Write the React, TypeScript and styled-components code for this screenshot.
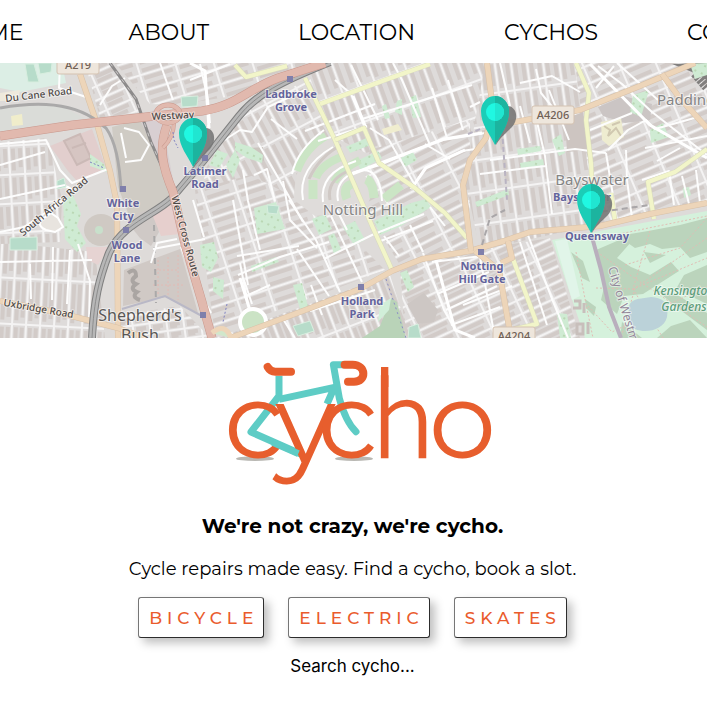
import React from "react";
import styled, { createGlobalStyle } from "styled-components";

const GlobalStyle = createGlobalStyle`
  *, *::before, *::after { box-sizing: border-box; }
  body {
    margin: 0;
    background: #ffffff;
    color: #000000;
    font-family: Montserrat, Inter, sans-serif;
    overflow-x: hidden;
  }
`;

const Nav = styled.nav`
  display: flex;
  justify-content: center;
  overflow: hidden;
  height: 63px;
  padding: 2px 0 0 38px;
`;

const NavList = styled.ul`
  display: flex;
  flex: none;
  align-items: center;
  gap: 89px;
  margin: 0;
  padding: 0;
  list-style: none;
`;

const NavItem = styled.li<{ $first?: boolean }>`
  margin-right: ${(p) => (p.$first ? "16px" : "0")};
`;

const NavLink = styled.a`
  color: #000000;
  font-size: 22px;
  line-height: 28px;
  font-weight: 400;
  text-decoration: none;
`;

const MapSvg = styled.svg`
  display: block;
  width: 100%;
  height: 275px;
  font-family: "Noto Sans", sans-serif;
`;

const Main = styled.main`
  display: flex;
  flex-direction: column;
  align-items: center;
  padding: 7px 14px 24px 12px;
`;

const LogoSvg = styled.svg`
  width: 285px;
  height: 150px;
  margin-left: 20px;
  font-family: Montserrat, Lato, sans-serif;
`;

const Title = styled.h1`
  margin: 17px 0 0;
  font-size: 20px;
  line-height: 28px;
  font-weight: 700;
`;

const Lead = styled.p`
  margin: 17px 0 0;
  font-size: 18px;
  line-height: 24px;
  font-weight: 400;
`;

const Choices = styled.div`
  display: flex;
  flex-wrap: wrap;
  justify-content: center;
  gap: 24px;
  margin-top: 16px;
`;

const ChoiceButton = styled.button`
  height: 41px;
  padding: 0 5px 0 10px;
  border: 1px solid;
  border-color: #767676 #2d2d2d #2d2d2d #767676;
  border-radius: 3px;
  background: #ffffff;
  box-shadow: 5px 5px 10px rgba(0, 0, 0, 0.25);
  color: #ea5b2c;
  font-family: inherit;
  font-size: 17px;
  font-weight: 500;
  line-height: 24px;
  letter-spacing: 5px;
`;

const SearchInput = styled.input`
  width: 240px;
  height: 28px;
  margin-top: 14px;
  padding: 0;
  border: 0;
  background: transparent;
  font-family: Inter, sans-serif;
  font-size: 17px;
  text-align: center;
  &::placeholder {
    color: #000000;
    opacity: 1;
  }
`;

type District = { id: string; points: string; angle: number; w: number; h: number };

const districts: District[] = [
  { id: "west", points: "0,242 95,252 105,338 0,338", angle: 3, w: 14, h: 46 },
  { id: "wormholt", points: "0,142 48,138 62,200 60,242 0,244", angle: -3, w: 15, h: 29 },
  { id: "scrubs", points: "85,63 112,63 140,112 100,118", angle: -24, w: 26, h: 13 },
  { id: "northken", points: "115,63 315,63 240,95 175,105 150,104", angle: -17, w: 37, h: 16 },
  { id: "latimer", points: "205,170 240,110 320,75 345,200 240,260 200,230", angle: 62, w: 36, h: 17 },
  { id: "norland", points: "195,190 250,175 330,215 385,270 215,334", angle: -18, w: 33, h: 17 },
  { id: "portobello", points: "305,63 485,63 485,130 380,160 330,135", angle: -20, w: 17, h: 34 },
  { id: "hill", points: "370,150 470,120 470,250 400,265 360,200", angle: -27, w: 36, h: 17 },
  { id: "westbourne", points: "485,63 575,63 595,225 480,250 465,180", angle: -8, w: 16, h: 32 },
  { id: "padding", points: "575,63 707,63 707,206 595,225", angle: -23, w: 34, h: 17 },
  { id: "kensington", points: "400,268 475,250 550,238 580,338 405,338", angle: -25, w: 34, h: 14 },
  { id: "addison", points: "215,338 390,275 410,338", angle: 69, w: 39, h: 14 },
  { id: "bush", points: "120,315 180,306 210,338 122,338", angle: -8, w: 17, h: 10 },
];

const greenAreas = [
  "63,200 73,195 81,214 77,226 86,243 77,252 65,239 64,222",
  "200,245 214,242 218,258 211,272 202,267",
  "213,277 224,280 223,299 213,291",
  "90,154 104,164 107,172 90,166",
  "209,165 217,150 228,154 219,168",
  "226,165 235,150 240,160 233,178",
  "235,142 251,147 263,155 262,163 247,158 235,150",
  "374,221 411,203 426,199 431,207 401,226 380,235",
  "343,148 369,137 373,144 345,155",
  "350,164 378,151 382,158 355,173",
  "312,219 325,214 332,229 319,235",
  "343,227 355,221 365,240 354,245",
  "328,236 334,233 341,249 334,254",
  "254,208 276,202 285,229 257,234",
  "293,285 302,283 308,307 300,309",
  "251,266 276,257 279,262 252,272",
  "400,273 407,270 414,287 408,292",
  "409,98 416,95 421,117 413,118",
  "382,106 386,104 390,118 385,119",
  "397,101 402,99 402,115 395,112",
  "401,158 413,152 417,160 405,167",
  "633,95 649,90 641,117 630,112",
  "650,130 663,123 669,137 651,143",
  "517,149 540,146 541,151 518,155",
  "520,163 543,159 544,165 521,169",
  "552,140 561,134 565,153 559,156",
  "475,202 508,189 509,195 477,207",
  "557,313 567,314 571,338 560,338",
  "690,64 707,63 707,75 695,79",
  "683,188 689,187 691,195 684,198",
];

const courts = [
  "10,238 37,237 37,250 10,250",
  "25,64 34,64 39,82 28,82",
  "38,63 52,63 51,72 40,74",
  "181,97 198,96 197,106 182,107",
  "57,181 64,178 66,187 57,189",
  "267,205 279,206 277,214 268,213",
  "293,326 310,321 314,331 298,336",
  "409,327 418,324 421,338 408,338",
];

const whiteStreets = [
  "M0 144 L46 140 L60 170 L72 183 L108 169 M0 165 L45 152 M0 199 L65 185 M0 232 L24 227 L66 199",
  "M0 262 L92 260 M53 247 L52 300 M70 250 L67 304 M78 244 L90 281 L89 320 M30 264 L31 299",
  "M86 97 L59 88 L60 63 M100 105 L112 86 L125 78 M200 64 L208 100 L210 123 M160 63 L173 100 M190 80 L230 64",
  "M124 128 L139 132 L149 145 L141 160 L125 162 M121 133 L126 158",
  "M153 249 L190 242 L205 239 M151 263 L157 243 L177 239 M181 247 L197 288 L211 313 M193 200 L204 237",
  "M208 125 L212 148 L240 130 L252 132 L268 107 L305 90",
  "M271 119 L297 139 M258 143 L287 193 L303 222 M243 170 L248 201 L260 250 M233 200 L248 285",
  "M254 175 L267 169 L275 201 M289 200 L316 240 L340 292 M283 181 L290 220 L317 248",
  "M237 256 L299 246 M238 275 L280 257 L329 242 M244 280 L252 304 M297 249 L329 296 M331 216 L362 282",
  "M305 131 L375 104 M318 141 L367 126 M335 80 L351 94 L365 128 M351 65 L378 120",
  "M352 173 L380 165 L420 148 L443 140 L485 133 M370 128 L389 140 L416 187 M425 144 L450 159 M413 187 L425 168 L462 151 L482 148",
  "M393 63 L402 80 L430 145 M432 88 L447 138 M448 80 L463 130 M362 119 L472 85",
  "M324 259 L372 235 L424 214 M378 242 L433 221 M410 225 L423 252 M423 253 L431 275 L444 310 L453 326",
  "M432 262 L482 256 M437 294 L489 272 M446 310 L497 286 M451 325 L500 307 M480 257 L495 338",
  "M490 160 L575 149 L606 153 M480 174 L527 168 L546 166 M534 109 L545 156 L552 214",
  "M549 90 L569 140 M520 83 L552 76 L580 92 M536 69 L541 93 L554 109",
  "M598 66 L622 84 L652 112 L707 155 M617 63 L658 100 M596 88 L614 66 M590 130 L632 113",
  "M608 150 L628 130 L646 120 L655 129 L698 117 M626 150 L627 180 L632 218 M606 153 L617 220 M642 180 L669 171 L674 205",
  "M645 148 L707 136 M657 161 L680 148 M682 176 L689 204 M696 170 L700 203",
  "M528 235 L552 299 L568 338 M520 242 L547 325 M311 285 L322 315 M310 311 L375 290 M283 319 L295 338",
  "M240 263 L248 304 M244 297 L270 285 M337 210 L347 230 M384 236 L399 256 M430 207 L445 226",
  "M463 305 L512 286 M500 63 L510 106 M520 106 L530 143 M470 107 L480 102",
];

const yellowRoads = [
  "M305 78 L335 140 L360 198 L373 228 L392 270",
  "M320 104 L385 80 L430 64",
  "M335 140 L364 128 L379 163 L415 188 L445 213 L467 238",
  "M235 65 L246 77 L287 66",
  "M576 63 L589 93 L586 120 L591 163 L592 190",
  "M707 149 L675 172 L648 182 L654 219",
  "M513 259 L537 324 L515 329",
  "M611 193 L615 221",
];

const orangeRoads = [
  "M80 74 L97 124 L110 171 L117 204 L118 338",
  "M0 301 L60 313 L118 328 L145 338",
  "M230 338 L300 312 L360 289 L392 271 L422 259 L470 251 L504 241 L530 232 L600 226 L650 214 L707 203",
  "M487 63 L493 110 L486 138 L470 160 L463 185 L471 251",
  "M488 127 L580 110 L640 86 L695 63",
  "M662 74 L679 97 L707 128",
  "M475 251 L499 270 L511 338",
  "M508 241 L512 258 L501 263",
];

const railPath =
  "M92 338 C94 300 99 279 109 253 C122 224 154 215 171 199 L204 160 L239 116 C257 94 280 82 330 62";

type LabelKind = "area" | "station" | "road";
type MapLabel = { text: string; x: number; y: number; size: number; kind: LabelKind; angle?: number };

const labelColors: Record<LabelKind, string> = {
  area: "#858585",
  station: "#63639c",
  road: "#4d4846",
};

const labelWeights: Record<LabelKind, number> = { area: 400, station: 700, road: 500 };

const mapLabels: MapLabel[] = [
  { text: "Du Cane Road", x: 39, y: 98, size: 10, kind: "road", angle: -7 },
  { text: "Westway", x: 173, y: 119, size: 10, kind: "road", angle: -3 },
  { text: "South Africa Road", x: 56, y: 209, size: 10, kind: "road", angle: -40 },
  { text: "Uxbridge Road", x: 38, y: 312, size: 10, kind: "road", angle: 10 },
  { text: "West Cross Route", x: 182, y: 237, size: 10, kind: "road", angle: 75 },
  { text: "Ladbroke", x: 291, y: 98, size: 11, kind: "station" },
  { text: "Grove", x: 291, y: 111, size: 11, kind: "station" },
  { text: "Latimer", x: 205, y: 175, size: 11, kind: "station" },
  { text: "Road", x: 205, y: 188, size: 11, kind: "station" },
  { text: "White", x: 123, y: 207, size: 11, kind: "station" },
  { text: "City", x: 123, y: 220, size: 11, kind: "station" },
  { text: "Wood", x: 127, y: 249, size: 11, kind: "station" },
  { text: "Lane", x: 127, y: 262, size: 11, kind: "station" },
  { text: "Holland", x: 362, y: 305, size: 11, kind: "station" },
  { text: "Park", x: 362, y: 318, size: 11, kind: "station" },
  { text: "Notting", x: 482, y: 270, size: 11, kind: "station" },
  { text: "Hill Gate", x: 482, y: 283, size: 11, kind: "station" },
  { text: "Bayswater", x: 582, y: 201, size: 11, kind: "station" },
  { text: "Queensway", x: 597, y: 240, size: 11, kind: "station" },
  { text: "Notting Hill", x: 363, y: 215, size: 15, kind: "area" },
  { text: "Bayswater", x: 592, y: 185, size: 15, kind: "area" },
  { text: "Paddington", x: 698, y: 105, size: 15, kind: "area" },
];

const markers = [
  { x: 193, y: 167 },
  { x: 495, y: 145 },
  { x: 591, y: 233 },
];

const stations = [
  [290, 79], [205, 158], [123, 189], [126, 230], [361, 287], [481, 252], [203, 315],
];

function Road({ d, casing, fill, width }: { d: string; casing: string; fill: string; width: number }) {
  return (
    <g fill="none" strokeLinejoin="round">
      <path d={d} stroke={casing} strokeWidth={width + 1} />
      <path d={d} stroke={fill} strokeWidth={width} />
    </g>
  );
}

function RoadBadge({ x, y, text }: { x: number; y: number; text: string }) {
  return (
    <g>
      <rect x={x - 21} y={y - 9} width="42" height="18" rx="2" fill="#eee6dc" stroke="#d4c2b1" />
      <text x={x} y={y + 4} fontSize="11" fontWeight="500" textAnchor="middle" fill="#706156">{text}</text>
    </g>
  );
}

function Marker({ x, y }: { x: number; y: number }) {
  return (
    <g transform={`translate(${x} ${y})`}>
      <path d="M1 0 C5 -7 9 -10 17 -18 C24 -26 22 -38 13 -39 L5 -37 Z" fill="#777777" fillOpacity=".9" />
      <path d="M0 0 C-5 -11 -14 -20 -14 -34 A14 15 0 0 1 14 -34 C14 -20 6 -11 0 0Z" fill="#1bcdb7" />
      <path d="M0 0 V-49 A14 15 0 0 1 14 -34 C14 -20 6 -11 0 0Z" fill="#1cb49f" />
      <circle cy="-33" r="9" fill="#20f8e2" />
      <path d="M0 -42 A9 9 0 0 1 0 -24Z" fill="#20e6d1" />
    </g>
  );
}

function LondonMap() {
  return (
    <MapSvg viewBox="0 63 707 275" preserveAspectRatio="xMidYMid slice" role="img" aria-label="Map of cychos in west London">
      <defs>
        {districts.map((d) => (
          <pattern key={d.id} id={d.id} width={d.w} height={d.h} patternUnits="userSpaceOnUse" patternTransform={`rotate(${d.angle})`}>
            <rect width={d.w} height={d.h} fill="#dedbda" />
            <path
              d={
                d.w > d.h
                  ? `M4 5 H${d.w - 3} M4 ${d.h - 3} H${d.w - 6}`
                  : `M5 4 V${d.h - 3} M${d.w - 3} 4 V${d.h - 6}`
              }
              stroke="#d2cbc8"
              strokeWidth="4"
            />
            <path d={`M0 1 H${d.w} M1 0 V${d.h}`} stroke="#f4f3f3" strokeWidth="2" />
          </pattern>
        ))}
        <pattern id="trees" width="7" height="8" patternUnits="userSpaceOnUse" patternTransform="rotate(25)">
          <circle cx="2" cy="2" r="1" fill="#b3d1aa" />
        </pattern>
      </defs>

      <rect y="63" width="707" height="275" fill="#dedbd9" />
      {districts.map((d) => (
        <polygon key={d.id} points={d.points} fill={`url(#${d.id})`} />
      ))}

      <polygon points="0,63 62,63 66,83 20,92 0,88" fill="#dceee5" />
      <polygon points="0,107 60,105 84,118 0,132" fill="#dadcd8" />
      <polygon points="0,93 20,90 18,101 0,101" fill="#eee9dc" />
      <polygon points="50,146 92,129 106,168 77,181 68,171" fill="#e2cecd" />
      <path d="M64 141 L80 134 L91 158 L77 165Z M72 148 L86 143" fill="#d6c5c2" stroke="#cbb9b6" strokeWidth="2" />
      <polygon points="11,116 22,114 23,125 12,126" fill="#f0edcb" />
      <polygon points="112,127 143,119 157,153 171,197 163,205 130,218 118,187" fill="#cfcbc4" />
      <polygon points="140,120 158,107 166,142 176,196 171,196 155,151" fill="#d8cfd2" />
      <ellipse cx="101" cy="230" rx="17" ry="16" fill="#cfc9c3" />
      <circle cx="99" cy="230" r="4" fill="#c8e0cb" />
      <polygon points="86,247 109,247 98,265 88,260" fill="#e6d3d2" />
      <polygon points="124,218 153,208 159,232 151,246 140,238" fill="#cfc9c6" />
      <polygon points="152,214 171,205 180,234 161,236" fill="#e6cfcd" />
      <polygon points="153,259 180,249 198,313 166,297 123,306 124,270" fill="#d0c9c5" />
      <path d="M155 270 H179 M153 285 H184 M158 260 V295 M168 257 V296 M178 255 V300" fill="none" stroke="#e2bab4" strokeDasharray="2 2" />
      <path d="M128 273 q8 -6 8 3 q-7 5 0 8 q-7 5 1 8 q-6 5 3 8" fill="none" stroke="#aaa5a2" strokeWidth="4" />
      <path d="M154 225 L156 303" stroke="#aaa9a9" strokeWidth="2" strokeDasharray="6 5" />
      <path d="M122 309 L165 296 L202 316" fill="none" stroke="#b9b8c6" strokeWidth="2" />
      <path d="M60 188 q6 -4 12 2 M46 230 q-9 -4 -5 -10 l10 -7 7 5 5 9 -8 5z" fill="#e8e4df" stroke="#ffffff" strokeWidth="2" />
      <polygon points="565,119 583,112 588,150 567,152" fill="#cdc5c1" />
      <polygon points="598,107 624,96 652,104 650,120 625,123 603,116" fill="#cbc5c4" />
      <polygon points="601,122 621,118 624,137 609,146 602,140" fill="#eeecd0" />
      <path d="M604 126 l6 4 -2 6 8 -8 5 8 M612 125 l8 -3" fill="none" stroke="#d0c8b0" strokeWidth="2" />
      <polygon points="382,129 398,124 402,130 384,135" fill="#f0edcf" />
      <polygon points="407,304 424,293 438,310 434,322 418,324" fill="#cdc7c4" />
      <polygon points="251,148 263,147 264,161 255,160" fill="#cbc5bf" />
      <polygon points="672,64 707,63 707,80 692,72" fill="#82807f" />
      <path d="M695 73 L707 87" stroke="#82807f" strokeWidth="10" strokeDasharray="3 1" />

      {greenAreas.map((points) => (
        <g key={points}>
          <polygon points={points} fill="#cfebd3" />
          <polygon points={points} fill="url(#trees)" />
        </g>
      ))}
      {courts.map((points) => (
        <polygon key={points} points={points} fill="#b7dcca" stroke="#d8eedf" />
      ))}

      <g fill="none">
        <path d="M294 200 C294 172 303 142 333 137 L347 148 L374 190 L364 212 L315 216Z" fill="#dfdcda" />
        <path d="M297 171 Q305 148 326 136 M316 178 Q321 164 344 156 M334 182 Q340 170 360 160" stroke="#cbe5c5" strokeWidth="8" />
        <path d="M313 199 V180 M347 199 Q342 187 352 184 M366 179 Q373 182 374 198 M384 199 L401 185" stroke="#cbe5c5" strokeWidth="9" />
        <path d="M292 174 Q297 150 324 130 M303 200 Q297 168 333 147 M323 202 Q319 173 356 161 M338 201 Q334 179 358 171 Q380 165 382 201" stroke="#ffffff" strokeWidth="2" />
        <path d="M309 179 Q319 157 341 145 M330 200 Q326 181 348 171" stroke="#d0c9c5" strokeWidth="3" />
      </g>

      <g fill="none" stroke="#fdfdfd" strokeWidth="2" strokeLinejoin="round">
        {whiteStreets.map((d) => (
          <path key={d} d={d} />
        ))}
      </g>
      <path d="M190 63 L205 71 L209 128 M353 96 L366 128 M352 174 L444 139 L482 133 M411 189 L426 168 L465 150 M590 64 L650 125 L707 158 M436 260 L455 330 L475 338 M240 278 L251 314" fill="none" stroke="#ffffff" strokeWidth="3" />
      <circle cx="253" cy="322" r="13" fill="#cbe3c5" stroke="#ffffff" strokeWidth="4" />

      <polygon points="362,338 380,326 391,298 397,302 406,338" fill="#b9d3b8" />
      <polygon points="378,322 380,305 391,298 389,310" fill="#d1efd9" />
      <path d="M386 279 L406 338" stroke="#8d8fc5" strokeWidth="1" strokeDasharray="2 3" />

      <polygon points="552,240 594,232 707,211 707,338 585,338" fill="#d5f1dc" />
      <polygon points="555,241 567,239 580,296 572,300" fill="#e1f5e9" />
      <g fill="#bbd4bc">
        <path d="M596 250 L624 238 L632 241 L617 258 L631 267 L650 275 L671 262 L679 271 L643 294 L624 296 L617 314 L601 300 L605 283Z" />
        <path d="M618 236 L648 231 L680 225 L707 218 V252 L690 258 L680 247 L662 249 L650 244 L635 248Z" />
        <path d="M644 252 L666 255 L650 263Z M684 275 L707 265 V304 L676 289Z M656 290 L679 296 L707 313 V330 L679 309Z M671 326 L690 320 L707 338 H657Z M622 322 L642 338 H620Z" />
        <path d="M571 252 L583 261 L590 282 L582 278Z M585 299 L596 307 L594 316 L586 308Z" />
      </g>
      <path d="M595 239 L707 216 M597 252 L630 275 L707 327 M707 238 L635 288 L621 338 M650 231 L633 289 L663 338 M625 265 L680 248 L707 218 M576 252 L586 304 L593 338 M588 306 L612 332 L707 286 M596 288 L633 289 L707 258" fill="none" stroke="#e1bdb4" strokeDasharray="2 2" />
      <path d="M629 307 C631 297 643 299 651 297 C666 298 669 306 667 317 C664 330 646 334 635 329 C626 324 629 315 629 307Z" fill="#bbd2d9" />
      <path d="M574 301 h6 v7 h-7 M584 303 v10 M577 324 h6 v10 h-6z M588 322 v12" fill="none" stroke="#c8bfbb" strokeWidth="3" />
      <path d="M592 237 L601 270 L609 307 L621 338" fill="none" stroke="#b9afbd" strokeWidth="4" />

      {yellowRoads.map((d) => <Road key={d} d={d} casing="#d8dabd" fill="#f2f5c9" width={4} />)}
      {orangeRoads.map((d) => <Road key={d} d={d} casing="#d8c1a8" fill="#edd5b9" width={5} />)}

      <g fill="none">
        <path d="M0 108 C38 101 71 104 93 118 L106 128 C116 142 120 165 121 192" stroke="#aaa9a9" strokeWidth="3" />
        <path d="M110 63 L136 99 L151 142 L176 199 L196 286 L207 329" stroke="#8d8b8b" strokeWidth="3" />
        <path d="M110 63 L136 99 L151 142 L176 199 L196 286 L207 329" stroke="#cdcaca" strokeDasharray="4 6" />
        <path d={railPath} stroke="#7f7f7f" strokeWidth="8" />
        <path d={railPath} stroke="#b7b7b7" strokeWidth="6" />
        <path d={railPath} stroke="#8d8d8d" strokeWidth="1" />
        <path d="M501 115 L507 200 M468 134 L483 128" stroke="#b9b3c2" strokeWidth="2" strokeDasharray="5 3" />
        <path d="M482 245 L490 218 L505 210 M592 213 L650 205" stroke="#a9a6a8" strokeWidth="2" strokeDasharray="6 4" />
      </g>
      <Road d="M0 136 L73 125 L155 116 L202 111 C236 106 248 89 278 78 L325 63" casing="#c8988d" fill="#e1b9ae" width={8} />
      <Road d="M167 125 C158 149 163 168 173 192 L185 244 L202 302 L212 338" casing="#c8988d" fill="#e1b9ae" width={8} />
      <Road d="M174 122 Q174 137 163 148" casing="#c8988d" fill="#e1b9ae" width={3} />
      <ellipse cx="168" cy="114" rx="12" ry="9" fill="none" stroke="#c8988d" strokeWidth="5" />
      <ellipse cx="168" cy="114" rx="12" ry="9" fill="none" stroke="#e1b9ae" strokeWidth="4" />
      <path d="M212 333 Q225 322 231 338" fill="#d1e7cb" stroke="#edd5b9" strokeWidth="5" />
      <path d="M173 132 l1 8 4 8 M90 162 l14 6 M227 304 l-4 18" fill="none" stroke="#7e80c2" strokeWidth="1" strokeDasharray="2 2" />

      {stations.map(([x, y]) => <rect key={`${x}-${y}`} x={x - 3} y={y - 3} width="6" height="6" fill="#7f7fab" />)}

      <g textAnchor="middle" paintOrder="stroke" stroke="#ffffff" strokeOpacity=".55" strokeWidth="2" strokeLinejoin="round">
        {mapLabels.map((l) => (
          <text
            key={`${l.text}-${l.kind}-${l.y}`}
            x={l.x}
            y={l.y}
            fontSize={l.size}
            fontWeight={labelWeights[l.kind]}
            fill={labelColors[l.kind]}
            transform={l.angle ? `rotate(${l.angle} ${l.x} ${l.y})` : undefined}
          >
            {l.text}
          </text>
        ))}
        <text x="140" y="321" fontSize="16" fill="#595756">Shepherd's</text>
        <text x="140" y="341" fontSize="16" fill="#595756">Bush</text>
        <g fontSize="12" fontStyle="italic" fontWeight="500" fill="#5d9d7b">
          <text x="684" y="295">Kensington</text>
          <text x="684" y="311">Gardens</text>
        </g>
        <text x="608" y="268" fontSize="12" fill="#928799" textAnchor="start" transform="rotate(73 608 268)">City of Westminster</text>
      </g>
      <RoadBadge x={78} y={65} text="A219" />
      <RoadBadge x={553} y={115} text="A4206" />
      <RoadBadge x={514} y={336} text="A4204" />
      {markers.map((m) => <Marker key={m.x} {...m} />)}
    </MapSvg>
  );
}

function Logo() {
  return (
    <LogoSvg viewBox="0 0 855 450" role="img" aria-label="cycho">
      <ellipse cx="105" cy="341" rx="57" ry="7" fill="#b9b8b3" />
      <ellipse cx="402" cy="341" rx="57" ry="7" fill="#b9b8b3" />
      <g fill="none" stroke="#5eccc5" strokeWidth="21" strokeLinejoin="round">
        <path d="M177 92 V153 L93 261 L242 327" />
        <path d="M177 163 L343 127 L321 177" />
        <path d="M370 59 H340 L358 160 Q377 230 408 260" strokeLinecap="round" />
      </g>
      <g fill="#e75e2d" fontSize="322">
        <text x="12" y="339">c</text>
        <text x="166" y="352" fontSize="335">y</text>
        <text x="293" y="339">c</text>
        <text x="459" y="335" fontSize="330" fontFamily="Lato, sans-serif" fontWeight="300" stroke="#e75e2d" strokeWidth="7">h</text>
        <text x="626" y="339">o</text>
        <rect x="483" y="66" width="22" height="60" />
      </g>
      <path d="M158 292 L235 326" fill="none" stroke="#5eccc5" strokeWidth="21" />
      <g fill="none" stroke="#e75e2d" strokeWidth="24" strokeLinecap="round" strokeLinejoin="round">
        <path d="M143 66 Q151 80 166 80 H213" />
        <path d="M374 59 H398 C440 60 440 110 402 110 H384" />
      </g>
    </LogoSvg>
  );
}

const navItems = ["HOME", "ABOUT", "LOCATION", "CYCHOS", "CONTACT"];
const services = ["BICYCLE", "ELECTRIC", "SKATES"];

export default function App() {
  return (
    <>
      <GlobalStyle />
      <Nav aria-label="Main">
        <NavList>
          {navItems.map((item, i) => (
            <NavItem key={item} $first={i === 0}>
              <NavLink href={`#${item.toLowerCase()}`}>{item}</NavLink>
            </NavItem>
          ))}
        </NavList>
      </Nav>
      <LondonMap />
      <Main>
        <Logo />
        <Title>We're not crazy, we're cycho.</Title>
        <Lead>Cycle repairs made easy. Find a cycho, book a slot.</Lead>
        <Choices>
          {services.map((s) => (
            <ChoiceButton key={s} type="button">{s}</ChoiceButton>
          ))}
        </Choices>
        <SearchInput type="text" aria-label="Search cycho" placeholder="Search cycho..." />
      </Main>
    </>
  );
}
